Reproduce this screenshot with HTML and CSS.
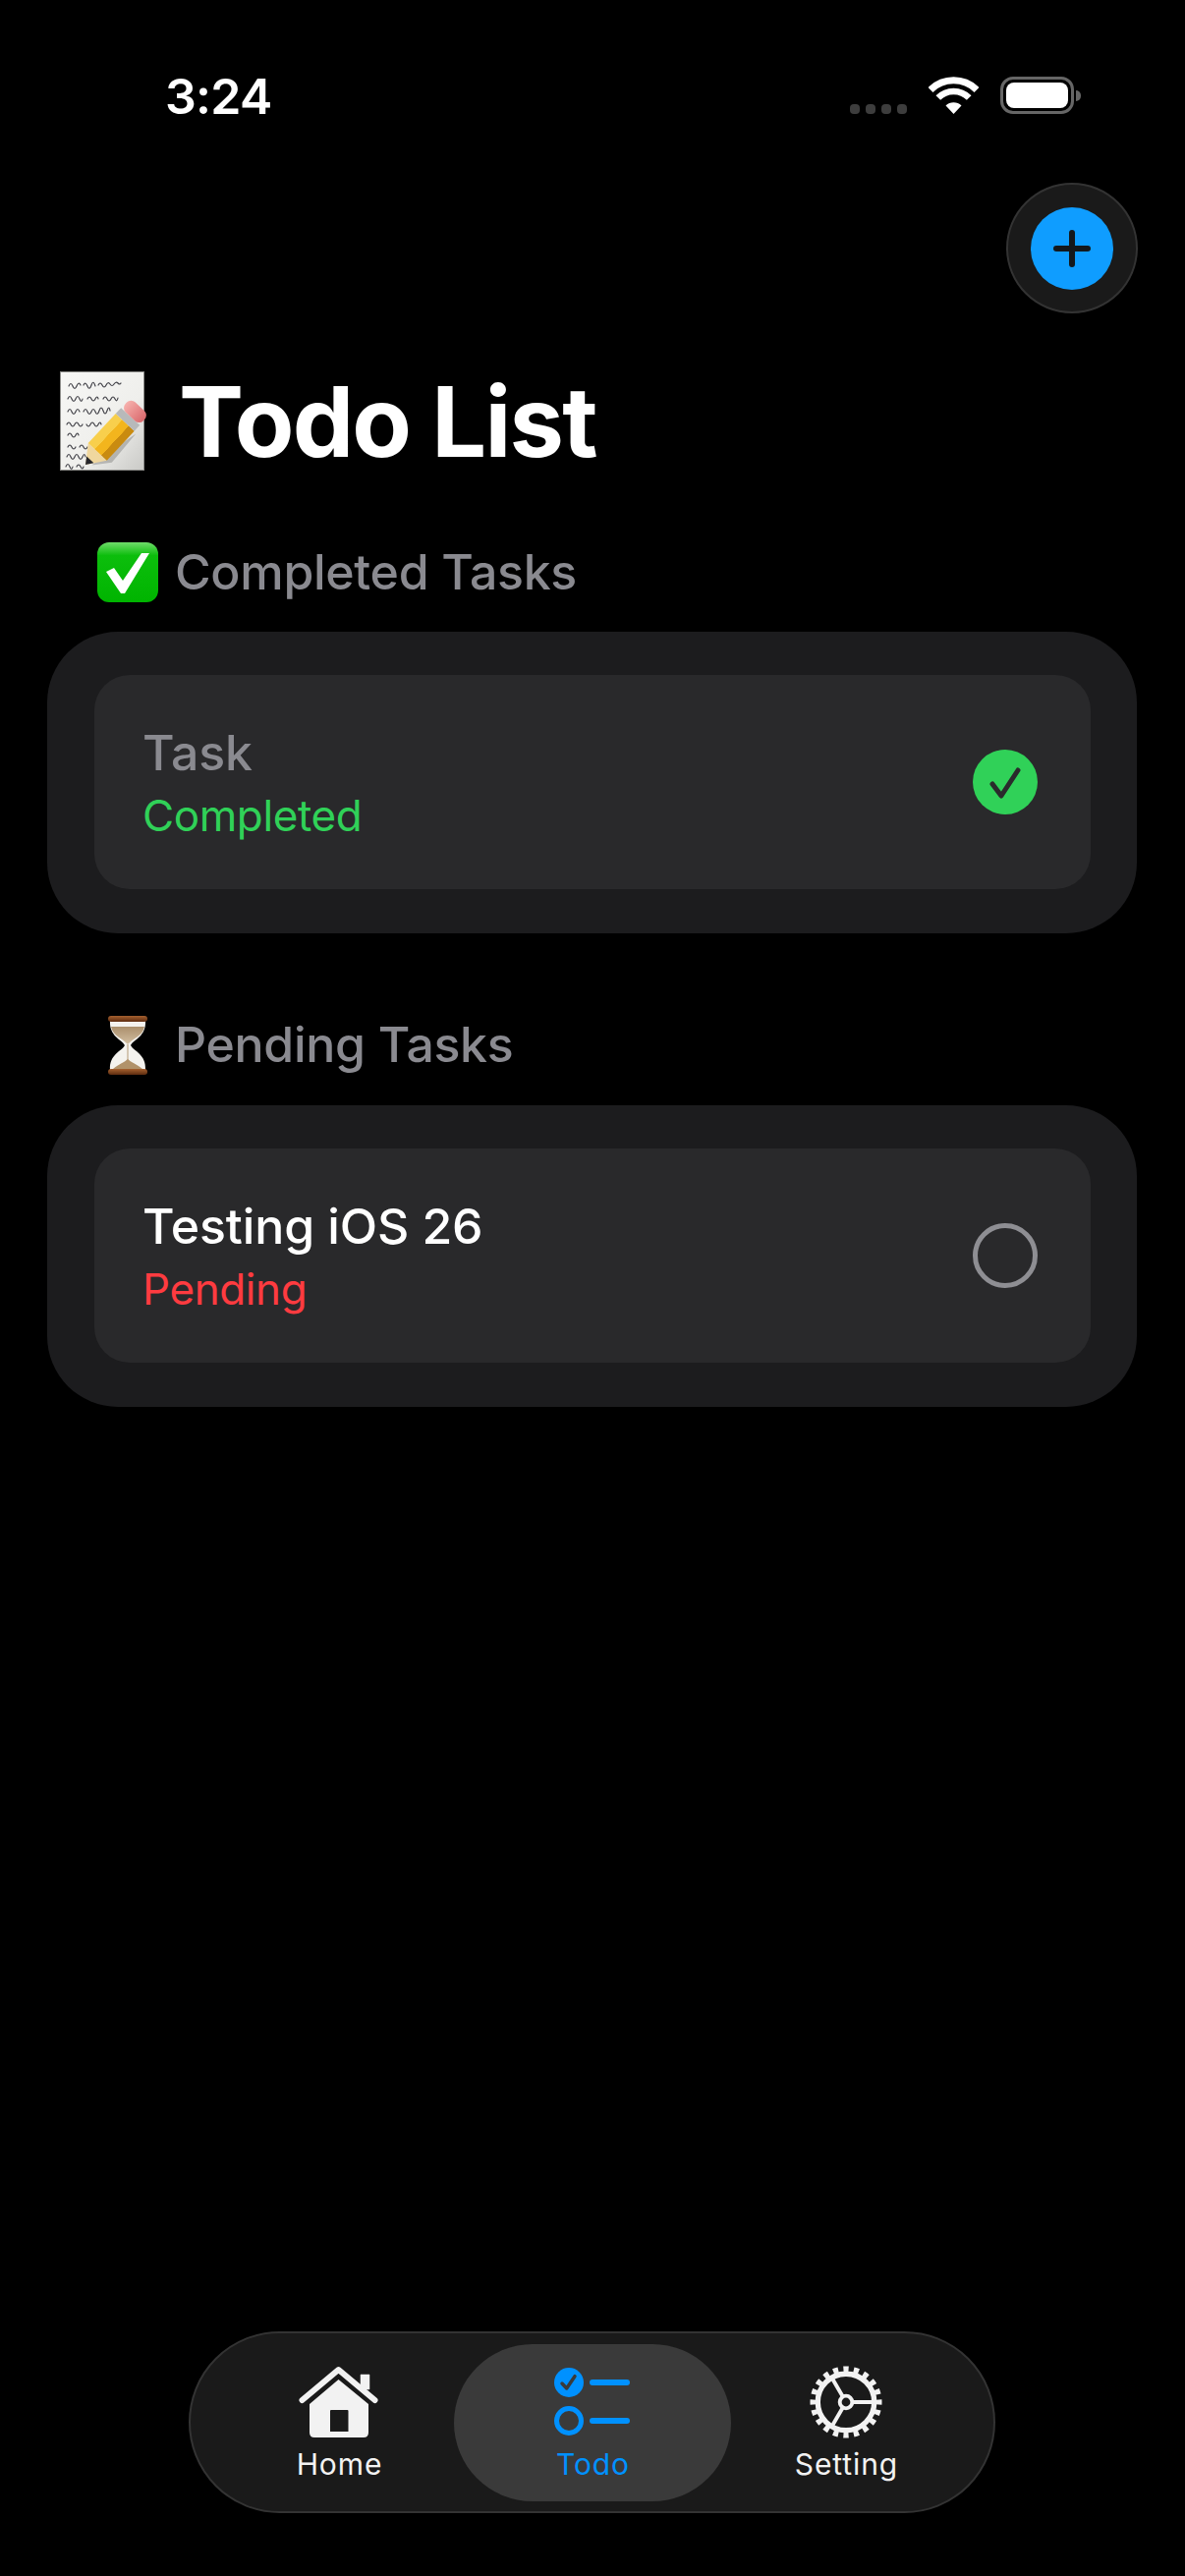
FILE: index.html
```html
<!DOCTYPE html>
<html lang="en">
<head>
  <meta charset="UTF-8" />
  <meta name="viewport" content="width=device-width, initial-scale=1.0" />
  <title>Todo List</title>
  <link rel="stylesheet" href="styles.css">
</head>
<body>
  <div class="page">
    <!-- status bar -->
    <div class="status">
      <span class="time">3:24</span>
      <div class="status-icons">
        <div class="signal"><i></i><i></i><i></i><i></i></div>
        <svg class="wifi" width="51" height="38" viewBox="0 0 51 38">
          <path d="M2 13.5 A33.5 33.5 0 0 1 49 13.5" fill="none" stroke="#fff" stroke-width="7"/>
          <path d="M9.8 21.5 A22 22 0 0 1 41.2 21.5" fill="none" stroke="#fff" stroke-width="6.5"/>
          <path d="M17.5 29.5 A11.5 11.5 0 0 1 33.5 29.5 L25.5 38 Z" fill="#fff"/>
        </svg>
        <div class="battery"><div class="battery-level"></div></div>
        <div class="battery-nub"></div>
      </div>
    </div>

    <div class="top-actions">
      <button class="add-btn">
        <span class="add-circle">
          <svg width="38" height="38" viewBox="0 0 38 38">
            <path d="M19 3 V35 M3 19 H35" stroke="#14181c" stroke-width="6" stroke-linecap="round"/>
          </svg>
        </span>
      </button>
    </div>

    <!-- title -->
    <div class="title-row">
      <svg class="memo" width="92" height="101" viewBox="0 0 92 101">
        <defs>
          <linearGradient id="paper" x1="0" y1="0" x2="1" y2="1">
            <stop offset="0" stop-color="#f7f7f5"/>
            <stop offset="0.6" stop-color="#efefec"/>
            <stop offset="1" stop-color="#c9c9c6"/>
          </linearGradient>
          <linearGradient id="pencilBody" x1="0" y1="0" x2="0" y2="1">
            <stop offset="0" stop-color="#f8cf4c"/>
            <stop offset="0.35" stop-color="#f8cf4c"/>
            <stop offset="0.36" stop-color="#f3b51d"/>
            <stop offset="0.7" stop-color="#f3b51d"/>
            <stop offset="0.71" stop-color="#c98b10"/>
            <stop offset="1" stop-color="#c98b10"/>
          </linearGradient>
          <linearGradient id="eraser" x1="0" y1="0" x2="0" y2="1">
            <stop offset="0" stop-color="#f6b0ac"/>
            <stop offset="1" stop-color="#d9696d"/>
          </linearGradient>
        </defs>
        <rect x="0.5" y="0.5" width="85" height="100" fill="url(#paper)" stroke="#8d8d8a"/>
        <g fill="none" stroke="#44444a" stroke-width="1.2" stroke-linecap="round">
          <path d="M9 15 q2 -5 4 0 t4 0 t4 -1 m3 0 q2 -4 4 1 t4 -1 t4 1 m3 -1 q2 -4 4 0 t4 0 t4 -1 t4 0 t4 -1 t3 0"/>
          <path d="M8 28 q2 -5 4 0 t4 0 t4 0 t3 0 m5 0 q2 -4 4 0 t4 0 t3 0 m5 0 q2 -4 4 0 t4 0 t4 0 t3 -1"/>
          <path d="M8 41 q2 -5 4 0 t4 0 t4 0 m4 0 q2 -5 4 0 t4 0 t4 0 t4 -1 t4 0 t4 0 t3 0"/>
          <path d="M7 54 q2 -4 4 0 t4 0 t4 0 t4 0 m4 0 q2 4 4 0 t4 0 t4 0 t3 0"/>
          <path d="M8 65 q2 -4 4 0 t4 0 t3 0"/>
          <path d="M8 77 q2 -4 4 0 t4 0 m4 0 q2 -4 4 0 t4 0"/>
          <path d="M7 87 q2 -5 4 0 t4 0 t4 0 t4 0 t3 0"/>
          <path d="M6 97 q2 -5 4 0 t3 0 m4 0 q2 -4 4 0 t3 0"/>
        </g>
        <g transform="translate(26 95) rotate(-47)">
          <path d="M4 5 L22 8 L58 16 L20 18 Z" fill="#000" opacity="0.2"/>
          <path d="M0 0 L18 -13 L18 13 Z" fill="#f0d79e"/>
          <path d="M0 0 L7 -5 L7 5 Z" fill="#26262a"/>
          <rect x="18" y="-13" width="41" height="26" fill="url(#pencilBody)"/>
          <rect x="59" y="-13" width="8" height="26" fill="#b7b9ba"/>
          <rect x="67" y="-12.5" width="14" height="25" rx="6" fill="url(#eraser)"/>
        </g>
      </svg>
      <h1>Todo List</h1>
    </div>

    <!-- completed -->
    <div class="section-head section-first">
      <span class="emoji-slot">
        <svg width="62" height="61" viewBox="0 0 62 61">
          <defs>
            <linearGradient id="greenBox" x1="0" y1="0" x2="0" y2="1">
              <stop offset="0" stop-color="#6fdc6a"/>
              <stop offset="0.22" stop-color="#0cbe0c"/>
              <stop offset="1" stop-color="#00b400"/>
            </linearGradient>
          </defs>
          <rect width="62" height="61" rx="12" fill="url(#greenBox)"/>
          <path d="M9 30 L17 26 L26 39 L45 11 L53 11 L28 52 L24 52 Z" fill="#fff"/>
        </svg>
      </span>
      <h2>Completed Tasks</h2>
    </div>
    <div class="card">
      <div class="task-row">
        <div class="task-text">
          <div class="task-name done">Task</div>
          <div class="task-state green">Completed</div>
        </div>
        <span class="check-done">
          <svg width="66" height="66" viewBox="0 0 66 66">
            <path d="M20 35 L29 47 L46 21" fill="none" stroke="#2a2a2c" stroke-width="5" stroke-linecap="round" stroke-linejoin="round"/>
          </svg>
        </span>
      </div>
    </div>

    <!-- pending -->
    <div class="section-head section-next">
      <span class="emoji-slot">
        <svg width="42" height="62" viewBox="0 0 42 62">
          <defs>
            <linearGradient id="wood" x1="0" y1="0" x2="0" y2="1">
              <stop offset="0" stop-color="#a5602f"/>
              <stop offset="1" stop-color="#5d2c10"/>
            </linearGradient>
            <linearGradient id="sandTop" x1="0" y1="0" x2="0" y2="1">
              <stop offset="0" stop-color="#ab8f6c"/>
              <stop offset="1" stop-color="#d3bfa2"/>
            </linearGradient>
          </defs>
          <path d="M3 6 H39 C40 22 27 25 24 31 C27 37 40 40 39 56 H3 C2 40 15 37 18 31 C15 25 2 22 3 6 Z" fill="#f4f2ee"/>
          <path d="M4 12 H38 C36 22 26 24 21 30 C16 24 6 22 4 12 Z" fill="url(#sandTop)"/>
          <path d="M20.5 30 H21.5 V46 H20.5 Z" fill="#b49a78"/>
          <path d="M6 55 C12 50 18 48 21 45 C24 48 30 50 36 55 Z" fill="#b1926a"/>
          <rect x="1" y="1" width="40" height="6" rx="3" fill="url(#wood)"/>
          <rect x="1" y="55" width="40" height="6" rx="3" fill="url(#wood)"/>
        </svg>
      </span>
      <h2>Pending Tasks</h2>
    </div>
    <div class="card">
      <div class="task-row">
        <div class="task-text">
          <div class="task-name">Testing iOS 26</div>
          <div class="task-state red">Pending</div>
        </div>
        <span class="check-open"></span>
      </div>
    </div>

    <!-- tab bar -->
    <div class="tabbar">
      <div class="tab">
        <svg class="tab-icon" width="81" height="74" viewBox="0 0 81 74">
          <path d="M63 9 H72 V24 H63 Z" fill="#f2f2f2" stroke="#f2f2f2" stroke-width="0.5" stroke-linejoin="round"/>
          <path d="M3.5 35 L40.5 4 L77.5 35" fill="none" stroke="#f2f2f2" stroke-width="6" stroke-linecap="round" stroke-linejoin="round"/>
          <path fill-rule="evenodd" fill="#f2f2f2" d="M40.5 14 L71 39 V68 Q71 73 66 73 H16 Q11 73 11 68 V39 Z M33 45 Q32 45 32 46 V67 H50.5 V46 Q50.5 45 49.5 45 Z"/>
        </svg>
        <span class="tab-label">Home</span>
      </div>
      <div class="tab active">
        <svg class="tab-icon" width="77" height="74" viewBox="0 0 77 74">
          <circle cx="15" cy="17" r="15" fill="#0091ff"/>
          <path d="M8 18 L12.7 23 L21 10.7" fill="none" stroke="#3a3a3a" stroke-width="3.5" stroke-linecap="round" stroke-linejoin="round"/>
          <circle cx="15" cy="56" r="12.5" fill="none" stroke="#0091ff" stroke-width="5"/>
          <path d="M39 17 H74 M39 56 H74" stroke="#0091ff" stroke-width="6" stroke-linecap="round"/>
        </svg>
        <span class="tab-label">Todo</span>
      </div>
      <div class="tab">
        <svg class="tab-icon" width="76" height="76" viewBox="0 0 76 76">
          <circle cx="38" cy="38" r="34.5" pathLength="20" fill="none" stroke="#f2f2f2" stroke-width="6" stroke-dasharray="0.5 0.5" stroke-dashoffset="0.25"/>
          <circle cx="38" cy="38" r="29.5" fill="none" stroke="#f2f2f2" stroke-width="5.5"/>
          <circle cx="38" cy="38" r="6.5" fill="none" stroke="#f2f2f2" stroke-width="4"/>
          <path d="M44 38 H67 M34.7 32.4 L23.5 13 M34.7 43.6 L23.5 63" stroke="#f2f2f2" stroke-width="4"/>
        </svg>
        <span class="tab-label">Setting</span>
      </div>
    </div>
  </div>
</body>
</html>
```

FILE: styles.css
```css
body {
  margin: 0;
  background: #000;
  font-family: Inter, "Liberation Sans", sans-serif;
  color: #fff;
}

.page {
  width: 1206px;
  height: 2622px;
  display: flex;
  flex-direction: column;
  overflow: hidden;
}

/* status bar */
.status {
  display: flex;
  justify-content: space-between;
  padding: 73px 106px 0 168px;
  height: 51px;
}
.time {
  font-size: 50px;
  line-height: 50px;
  font-weight: 600;
  letter-spacing: -0.7px;
}
.status-icons {
  display: flex;
  align-items: flex-start;
  padding-top: 5px;
}
.signal {
  display: flex;
  gap: 6px;
  margin-top: 28px;
  margin-right: 22px;
}
.signal i {
  width: 10px;
  height: 10px;
  border-radius: 4px;
  background: #3d3d3d;
}
.wifi {
  margin-right: 22px;
}
.battery {
  box-sizing: border-box;
  width: 75px;
  height: 38px;
  border: 3px solid #666;
  border-radius: 13px;
  padding: 3px;
}
.battery-level {
  height: 100%;
  background: #fff;
  border-radius: 8px;
}
.battery-nub {
  width: 5px;
  height: 11px;
  margin: 14px 0 0 2px;
  background: #666;
  border-radius: 0 5px 5px 0;
}

/* add button */
.top-actions {
  display: flex;
  justify-content: flex-end;
  padding: 62px 48px 0 0;
}
.add-btn {
  box-sizing: border-box;
  width: 134px;
  height: 133px;
  padding: 0;
  display: flex;
  align-items: center;
  justify-content: center;
  background: #1a1a1a;
  border: 2px solid #333;
  border-radius: 50%;
}
.add-circle {
  width: 84px;
  height: 84px;
  border-radius: 50%;
  background: #0f9dff;
  display: flex;
  align-items: center;
  justify-content: center;
}

/* title */
.title-row {
  display: flex;
  align-items: center;
  gap: 29px;
  padding: 59px 0 0 61px;
}
h1 {
  margin: 0;
  font-size: 99px;
  line-height: 100px;
  font-weight: 700;
  letter-spacing: -1.7px;
}

/* section headings */
.section-head {
  display: flex;
  align-items: center;
  gap: 17px;
  padding-left: 99px;
  height: 61px;
}
.section-first {
  margin-top: 73px;
}
.section-next {
  margin-top: 83px;
}
.section-next + .card {
  margin-top: 31px;
}
.section-head h2 {
  position: relative;
  top: -1px;
}
.emoji-slot {
  width: 62px;
  display: flex;
  justify-content: center;
}
h2 {
  margin: 0;
  font-size: 50px;
  line-height: 60px;
  font-weight: 500;
  letter-spacing: -0.3px;
  color: #8a8a90;
}

/* cards */
.card {
  margin: 30px 49px 0 48px;
  padding: 44px 47px 45px 48px;
  background: #1c1c1e;
  border-radius: 72px;
}
.task-row {
  display: flex;
  align-items: center;
  justify-content: space-between;
  box-sizing: border-box;
  height: 218px;
  padding: 0 54px 0 49px;
  background: #29292b;
  border-radius: 36px;
}
.task-text {
  padding-top: 4px;
}
.task-name {
  font-size: 50px;
  line-height: 60px;
  font-weight: 500;
  letter-spacing: -0.1px;
  margin-bottom: 3px;
}
.task-name.done {
  color: #8a8a90;
}
.task-state {
  font-size: 44px;
  line-height: 62px;
  letter-spacing: -0.4px;
}
.green {
  color: #30d158;
}
.red {
  color: #ff3b40;
}
.check-done {
  width: 66px;
  height: 66px;
  border-radius: 50%;
  background: #30d158;
  display: flex;
}
.check-open {
  box-sizing: border-box;
  width: 66px;
  height: 66px;
  border: 5px solid #8e8e93;
  border-radius: 50%;
}

/* tab bar */
.tabbar {
  box-sizing: border-box;
  width: 821px;
  height: 185px;
  margin: auto 0 64px 192px;
  display: flex;
  justify-content: center;
  background: #1a1a1a;
  border: 2px solid #333;
  border-radius: 93px;
}
.tab {
  position: relative;
  box-sizing: border-box;
  width: 258px;
  padding-top: 33px;
  display: flex;
  flex-direction: column;
  align-items: center;
  color: #f2f2f2;
}
.tab.active {
  color: #0091ff;
}
.tab.active::before {
  content: "";
  position: absolute;
  top: 11px;
  bottom: 10px;
  left: -12px;
  right: -12px;
  background: #3a3a3a;
  border-radius: 80px;
}
.tab-icon {
  position: relative;
  height: 74px;
}
.tab-label {
  position: relative;
  margin: 8px 0 0 2px;
  font-size: 30px;
  line-height: 36px;
  font-weight: 400;
  letter-spacing: 0.9px;
}
```
